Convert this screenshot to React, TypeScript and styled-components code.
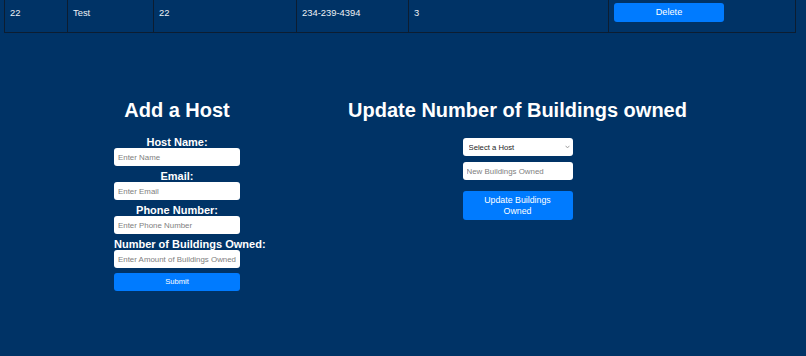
import React from "react";
import styled, { createGlobalStyle } from "styled-components";

const GlobalStyle = createGlobalStyle`
  html, body {
    margin: 0;
    padding: 0;
    background: #003366;
    font-family: "Liberation Sans", Arial, sans-serif;
    color: #ffffff;
  }
  #root {
    min-height: 100vh;
    background: #003366;
  }
`;

const Page = styled.div`
  display: flex;
  flex-direction: column;
  padding: 0 11px 0 4px;
`;

const Table = styled.table`
  border-collapse: collapse;
  table-layout: fixed;
  width: 791px;
`;

const Cell = styled.td`
  border: 1px solid #0c1d31;
  border-top: none;
  padding: 3px 5px 10px;
  vertical-align: top;
  font-size: 9.4px;
  line-height: 19px;
  color: #eef1f5;
`;

const BlueButton = styled.button<{ $w: string; $h: number; $fs: number; $mt?: number }>`
  display: block;
  width: ${(p) => p.$w};
  height: ${(p) => p.$h}px;
  margin-top: ${(p) => p.$mt ?? 0}px;
  border: none;
  border-radius: 3px;
  background: #007bff;
  color: #ffffff;
  font-family: "Liberation Sans", Arial, sans-serif;
  font-size: ${(p) => p.$fs}px;
  line-height: 10.5px;
  padding: 0 10px;
  cursor: pointer;
`;

const Forms = styled.div`
  display: flex;
  align-items: flex-start;
  gap: 111px;
  padding: 66px 0 0 114px;
`;

const Column = styled.div<{ $w: number }>`
  width: ${(p) => p.$w}px;
  display: flex;
  flex-direction: column;
  align-items: center;
`;

const Title = styled.h2`
  margin: 0;
  font-size: 20px;
  line-height: 23px;
  font-weight: 700;
  white-space: nowrap;
  text-align: center;
`;

const HostForm = styled.form`
  width: 126px;
  margin-top: 14px;
  display: flex;
  flex-direction: column;
`;

const Field = styled.div`
  display: flex;
  flex-direction: column;
  margin-bottom: 4px;
`;

const Label = styled.label`
  display: block;
  font-size: 11px;
  line-height: 12px;
  font-weight: 700;
  text-align: center;
  white-space: nowrap;
`;

const TextInput = styled.input`
  box-sizing: border-box;
  display: block;
  width: 100%;
  height: 18px;
  border: none;
  border-radius: 3px;
  background: #ffffff;
  padding: 0 4px;
  font-family: "Liberation Sans", Arial, sans-serif;
  font-size: 7.9px;
  color: #222;
  outline: none;
  &::placeholder {
    color: #808080;
  }
`;

const UpdateForm = styled.form`
  width: 110px;
  margin-top: 16px;
  display: flex;
  flex-direction: column;
  gap: 6px;
`;

const SelectWrap = styled.div`
  position: relative;
  width: 100%;
  height: 18px;
`;

const Select = styled.select`
  box-sizing: border-box;
  display: block;
  appearance: none;
  -webkit-appearance: none;
  width: 100%;
  height: 18px;
  margin: 0;
  border: none;
  border-radius: 3px;
  background: #ffffff;
  padding: 0 12px 0 6px;
  font-family: "Liberation Sans", Arial, sans-serif;
  font-size: 7.7px;
  color: #1e1e1e;
  outline: none;
`;

const Chevron = styled.svg`
  position: absolute;
  right: 3px;
  top: 7px;
  width: 5px;
  height: 4px;
  pointer-events: none;
`;

const ButtonSpacer = styled.div`
  margin-top: 5px;
`;

const widths = [63, 86, 143, 112, 200, 187];

export default function App() {
  return (
    <>
      <GlobalStyle />
      <Page>
        <Table>
          <colgroup>
            {widths.map((w, i) => (
              <col key={i} style={{ width: w }} />
            ))}
          </colgroup>
          <tbody>
            <tr>
              <Cell>22</Cell>
              <Cell>Test</Cell>
              <Cell>22</Cell>
              <Cell>234-239-4394</Cell>
              <Cell>3</Cell>
              <Cell>
                <BlueButton $w="110px" $h={19} $fs={9.2}>
                  Delete
                </BlueButton>
              </Cell>
            </tr>
          </tbody>
        </Table>
      </Page>
      <Forms>
        <Column $w={126}>
          <Title>Add a Host</Title>
          <HostForm onSubmit={(e) => e.preventDefault()}>
            <Field>
              <Label>Host Name:</Label>
              <TextInput placeholder="Enter Name" />
            </Field>
            <Field>
              <Label>Email:</Label>
              <TextInput placeholder="Enter Email" />
            </Field>
            <Field>
              <Label>Phone Number:</Label>
              <TextInput placeholder="Enter Phone Number" />
            </Field>
            <Field>
              <Label>Number of Buildings Owned:</Label>
              <TextInput placeholder="Enter Amount of Buildings Owned" />
            </Field>
            <BlueButton $w="100%" $h={18} $fs={7.6} $mt={1} type="submit">
              Submit
            </BlueButton>
          </HostForm>
        </Column>
        <Column $w={333}>
          <Title>Update Number of Buildings owned</Title>
          <UpdateForm onSubmit={(e) => e.preventDefault()}>
            <SelectWrap>
              <Select defaultValue="">
                <option value="">Select a Host</option>
                <option value="22">Test</option>
              </Select>
              <Chevron viewBox="0 0 5 4">
                <path d="M0.6 0.8 L2.5 2.9 L4.4 0.8" fill="none" stroke="#8a8a8a" strokeWidth="0.8" />
              </Chevron>
            </SelectWrap>
            <TextInput placeholder="New Buildings Owned" />
            <ButtonSpacer>
              <BlueButton $w="100%" $h={29} $fs={8.8} type="submit">
                Update Buildings Owned
              </BlueButton>
            </ButtonSpacer>
          </UpdateForm>
        </Column>
      </Forms>
    </>
  );
}
